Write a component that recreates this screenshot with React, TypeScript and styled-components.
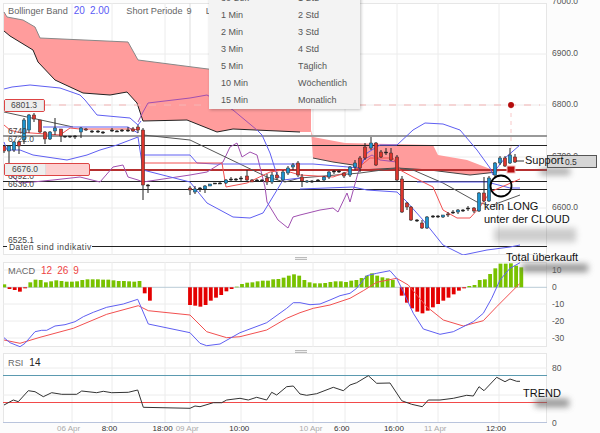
import React from "react"
import styled, { createGlobalStyle } from "styled-components"

const GlobalStyle = createGlobalStyle`
  html, body {
    margin: 0;
    padding: 0;
    background: #fcfcfc;
    font-family: "Liberation Sans", Arial, sans-serif;
  }
`

type Pt = [number, number]

// most curves were read off 3x crops, so they are stored as crop coords
const crop = (ox: number, oy: number, pts: Pt[]): Pt[] =>
  pts.map(([x, y]) => [ox + x / 3, oy + y / 3])

const toPath = (pts: Pt[]) => pts.map(([x, y]) => `${x.toFixed(1)},${y.toFixed(1)}`).join(" ")

const VERTICALS = [72, 112, 165, 190, 241, 313, 345, 397, 438, 499]

const Page = styled.div`
  position: relative;
  width: 600px;
  height: 433px;
  overflow: hidden;
  padding: 3px 0 0 3px;
  box-sizing: border-box;
`

const Panel = styled.section<{ $h: number; $gap: number }>`
  position: relative;
  display: grid;
  grid-template-columns: 544px 53px;
  grid-template-rows: minmax(0, 1fr);
  height: ${p => p.$h}px;
  margin-bottom: ${p => p.$gap}px;
`

const Plot = styled.svg`
  display: block;
  width: 544px;
  height: 100%;
  background: #fff;
  box-shadow: inset 0 0 0 1px #e6e6e6;
`

const Axis = styled.ul<{ $top: number }>`
  list-style: none;
  height: 0;
  margin: ${p => p.$top}px 0 0;
  padding: 0 0 0 5px;
`

const Tick = styled.li<{ $h: number }>`
  height: ${p => p.$h}px;
  line-height: ${p => p.$h}px;
  font-size: 8.5px;
  color: #555;
  white-space: nowrap;
`

const Legend = styled.div<{ $top: number }>`
  position: absolute;
  left: 5px;
  top: ${p => p.$top}px;
  display: flex;
  align-items: center;
  height: 13px;
  font-size: 9.2px;
  color: #666;
  white-space: nowrap;
`

const LegendValue = styled.span<{ $color: string; $left: number }>`
  color: ${p => p.$color};
  margin-left: ${p => p.$left}px;
  font-size: 10px;
`

const LegendName = styled.span<{ $left?: number }>`
  margin-left: ${p => p.$left ?? 0}px;
`

const Menu = styled.div`
  position: absolute;
  left: 209px;
  top: -11px;
  width: 151px;
  padding-bottom: 1px;
  display: grid;
  grid-template-columns: 89px 62px;
  grid-auto-rows: 17px;
  align-items: center;
  background: #f3f3f3;
  box-shadow: 1px 1px 3px rgba(0, 0, 0, 0.25);
  font-size: 9px;
  color: #555;
`

const MenuItem = styled.div<{ $second?: boolean }>`
  padding-left: ${p => (p.$second ? 0 : 12)}px;
`

const PriceTag = styled.div<{ $x: number; $y: number; $w: number }>`
  position: absolute;
  left: ${p => p.$x}px;
  top: ${p => p.$y}px;
  width: ${p => p.$w}px;
  height: 13px;
  display: flex;
  background: #fdcfcf;
  border: 1px solid #d44;
  border-radius: 2px;
  box-sizing: border-box;
  font-size: 8.5px;
  color: #444;
`

const PriceValue = styled.span`
  width: 40px;
  background: #eee;
  border-right: 1px solid #ddd;
  text-align: center;
  line-height: 11px;
`

const CurrentPrice = styled.div`
  position: absolute;
  left: 547px;
  top: 155px;
  width: 50px;
  height: 13px;
  background: #d6d6d6;
  border: 1px solid #555;
  box-sizing: border-box;
  padding-left: 17px;
  font-size: 8.5px;
  line-height: 12px;
  color: #333;
`

const Note = styled.div<{ $x: number; $y: number }>`
  position: absolute;
  left: ${p => p.$x}px;
  top: ${p => p.$y}px;
  font-size: 11px;
  line-height: 13px;
  color: #111;
  white-space: nowrap;
`

const Smudge = styled.div<{ $x: number; $y: number; $w: number; $h: number; $o: number }>`
  position: absolute;
  left: ${p => p.$x}px;
  top: ${p => p.$y}px;
  width: ${p => p.$w}px;
  height: ${p => p.$h}px;
  background: #666;
  opacity: ${p => p.$o};
  filter: blur(3px);
`

const Grip = styled.div<{ $y: number }>`
  position: absolute;
  left: 295px;
  top: ${p => p.$y}px;
  width: 12px;
  height: 3px;
  background: repeating-linear-gradient(#bbb 0 1px, #eee 1px 2px);
`

const TimeAxis = styled.div`
  display: flex;
  height: 10px;
  font-size: 8px;
  line-height: 10px;
  white-space: nowrap;
`

const Time = styled.span<{ $left: number; $muted?: boolean }>`
  margin-left: ${p => p.$left}px;
  color: ${p => (p.$muted ? "#aaa" : "#333")};
`

const Cloud = styled.polygon`
  fill: #ff9c9c;
`

const Curve = styled.polyline<{ $color: string; $w?: number }>`
  fill: none;
  stroke: ${p => p.$color};
  stroke-width: ${p => p.$w ?? 1};
  stroke-linejoin: round;
`

const Level = styled.line<{ $color: string; $w?: number }>`
  stroke: ${p => p.$color};
  stroke-width: ${p => p.$w ?? 1};
`

const PlotLabel = styled.text<{ $spaced?: boolean }>`
  font-size: 8.5px;
  letter-spacing: ${p => (p.$spaced ? 0.45 : 0)}px;
  fill: #444;
`

const BLUE = "#5f5ff2"
const RED = "#f25050"
const PURPLE = "#a050b0"

const cloudA: Pt[] = [
  [4, 12], [7, 17], [23, 20], [35, 27], [40, 38], [128, 42], [138, 60], [200, 68], [240, 73], [311, 100],
  [311, 132], [300, 132], [233, 129], [217, 132], [187, 120], [143, 121], [137, 103], [127, 92], [110, 95],
  [83, 93], [55, 80], [38, 62], [33, 50], [10, 36], [4, 31],
]
const cloudB: Pt[] = [
  [311, 130], [313, 137], [345, 143], [433, 145], [438, 155], [467, 160], [493, 170], [500, 172],
  [470, 175], [430, 170], [397, 168], [360, 170], [353, 165], [333, 162], [313, 158],
]
const cloudEdgeTop: Pt[] = [[4, 12], [7, 17], [23, 20], [35, 27], [40, 38], [128, 42], [138, 60], [200, 68], [240, 73]]
const cloudEdgeBottom: Pt[] = [
  [4, 31], [10, 36], [33, 50], [38, 62], [55, 80], [83, 93], [110, 95], [127, 92], [137, 103], [143, 121],
  [187, 120], [217, 132], [233, 129], [300, 132],
]
const cloudEdgeB: Pt[] = [[313, 158], [333, 162], [353, 165], [360, 170], [397, 168], [430, 170], [470, 175], [497, 172]]

const bollinger: Pt[][] = [
  [[4, 89], [12, 87], [30, 85], [60, 88], [80, 95], [85, 100], [97, 115], [130, 118], [138, 125], [141, 121]],
  [[43, 127], [128, 127], [138, 133]],
  [[4, 142], [7, 150], [20, 150], [33, 155], [67, 160], [87, 155], [100, 150], [117, 145], [138, 137], [143, 170],
   [190, 182], [207, 203], [233, 217], [250, 218], [263, 213], [277, 190], [283, 180], [300, 178]],
  [[143, 155], [190, 155], [197, 163], [215, 164], [313, 164], [360, 168], [367, 153], [380, 145], [397, 145],
   [413, 130], [425, 123], [443, 124], [460, 130], [477, 150], [490, 168], [493, 175], [497, 168], [505, 158], [520, 145]],
  [[257, 130], [262, 135], [270, 153], [277, 175], [283, 180]],
  [[300, 189], [353, 187], [367, 190], [397, 192], [407, 202], [423, 220], [443, 245], [463, 255], [487, 250], [510, 247], [520, 245]],
  [[417, 182], [487, 182], [510, 188], [520, 188]],
]
const midBand: Pt[][] = [
  [[4, 125], [10, 130], [17, 132], [60, 135], [70, 128], [80, 129], [133, 129], [138, 130]],
  [[143, 163], [222, 163], [226, 187], [247, 183], [270, 172], [283, 170], [300, 175], [333, 177], [358, 168],
   [370, 158], [393, 158], [400, 170], [413, 177], [433, 187], [443, 210], [457, 218], [470, 218], [480, 207], [490, 192], [520, 179]],
]
const average: Pt[][] = [
  [[4, 112], [73, 127]],
  [[143, 135], [190, 140], [267, 177], [285, 182], [300, 178], [360, 173], [397, 168], [413, 170], [443, 183], [477, 202], [488, 205]],
  [[493, 205], [520, 195]],
]
const purple: Pt[][] = [
  [[138, 122], [143, 112], [148, 103], [190, 98], [207, 95], [233, 110], [257, 130]],
  [[8, 173], [20, 183], [33, 182], [53, 180], [80, 177], [100, 182], [113, 167], [123, 165], [128, 177], [138, 180],
   [143, 182], [190, 175], [207, 172], [223, 162], [230, 147], [237, 143], [242, 157], [250, 152], [257, 155], [265, 187],
   [267, 202], [278, 220], [288, 228], [293, 217], [300, 215], [320, 210], [333, 208], [338, 212], [347, 193], [350, 202],
   [358, 173], [363, 160], [372, 155], [380, 160], [397, 162]],
]

// x, body top, body bottom, wick top, wick bottom, up
type Candle = [number, number, number, number, number, boolean]
const candles: Candle[] = [
  [4, 146, 151, 145, 153, false], [9, 146, 151, 145, 175, true], [14, 142, 150, 141, 152, true], [19, 142, 146, 141, 154, false],
  [24, 120, 140, 118, 144, true], [29, 115, 130, 114, 133, true], [34, 115, 119, 113, 122, false], [40, 120, 132, 120, 133, false],
  [45, 132, 139, 131, 144, false], [50, 132, 139, 131, 140, true], [55, 128, 131, 118, 135, true], [61, 129, 136, 129, 142, false],
  [65, 136, 136.5, 136, 138, true], [70, 136, 136.5, 136, 138, true], [75, 136, 136.5, 135, 139, true],
  [81, 128, 132, 127, 138, true], [86, 129, 130, 128, 131, false], [92, 131, 131.5, 130, 133, true], [98, 131, 131.5, 130, 133, true],
  [103, 132, 132.5, 131, 134, true], [112, 130, 130.5, 128, 132, true], [117, 131, 131.5, 130, 132, true], [122, 130, 130.5, 129, 132, true],
  [128, 130, 130.5, 127, 132, true], [133, 129, 131, 127, 132, false], [138, 127, 130, 125, 133, false],
  [143, 130, 185, 128, 200, false], [148, 185, 185.5, 184, 193, true],
  [190, 188, 190, 186, 195, false], [195, 189, 192, 186, 194, true], [200, 188, 188.5, 187, 192, true], [205, 186, 189, 185, 193, true],
  [210, 184, 186, 184, 186, true], [215, 183, 183.5, 183, 184, true], [220, 183, 183.5, 182, 184, true], [226, 180, 183, 179, 184, true],
  [231, 179, 179.5, 177, 182, true], [236, 179, 179.5, 178, 181, true], [241, 178, 178.5, 176, 181, true], [247, 176, 180, 170, 182, false],
  [252, 180, 182, 179, 182, false], [257, 180, 180.5, 179, 181, true], [262, 180, 180.5, 179, 181, true], [267, 178, 182, 174, 185, false],
  [272, 175, 182, 172, 184, true], [277, 175, 178, 172, 180, false], [283, 172, 180, 170, 181, true], [288, 168, 173, 166, 175, true],
  [293, 165, 167, 163, 170, true], [298, 163, 175, 161, 177, false],
  [302, 177, 181, 174, 187, false], [307, 181, 182, 180, 183, true], [312, 181, 181.5, 180, 183, true], [318, 180, 180.5, 179, 182, true],
  [324, 177, 180, 176, 181, true], [329, 172, 177, 171, 179, true], [334, 171, 171.5, 170, 174, true], [339, 171, 171.5, 170, 173, true],
  [344, 173, 176, 172, 178, false], [350, 167, 175, 166, 177, true], [355, 163, 167, 160, 170, true], [360, 158, 168, 156, 172, false],
  [365, 147, 158, 143, 160, false], [371, 143, 148, 137, 150, true], [376, 143, 165, 142, 166, false], [381, 152, 157, 150, 158, false],
  [386, 152, 152.5, 148, 155, true], [391, 153, 160, 148, 161, false], [397, 157, 180, 155, 182, false], [402, 179, 212, 176, 213, false],
  [407, 203, 207, 202, 210, false], [411, 207, 220, 206, 221, false], [417, 220, 220.5, 219, 222, true], [422, 223, 228, 220, 229, false],
  [427, 217, 228, 216, 229, true], [433, 216, 216.5, 215, 218, true], [438, 216, 216.5, 215, 218, true], [443, 215, 217, 215, 218, true],
  [448, 214, 215, 212, 217, false], [453, 212, 212.5, 210, 214, true], [458, 210, 212, 209, 214, true], [463, 210, 210.5, 209, 212, true],
  [468, 208, 208.5, 206, 211, true], [474, 208, 211, 207, 213, false], [479, 193, 211, 192, 212, true], [484, 193, 201, 177, 202, false],
  [489, 178, 201, 176, 202, true], [495, 163, 175, 162, 177, true], [500, 158, 163, 156, 165, true], [505, 158, 166, 156, 167, false],
  [510, 155, 163, 148, 164, true], [515, 157, 162, 154, 163, false],
]

const macdLeft = [
  103, 117, 120, 125, 115, 97, 89, 90, 97, 94, 91, 93, 95, 95, 94, 90, 88, 88, 88, 89, 89, 91, 93, 93, 94, 95, 93, 130, 152,
]
const macdMid = [
  165, 167, 170, 165, 152, 143, 135, 124, 117, 110, 102, 98, 97, 94, 92, 92, 88, 87, 83, 77, 73, 77, 90, 97, 100, 100, 99, 96,
  94, 94, 96, 92, 90, 84, 77, 70, 77, 82, 85, 90,
]
const macdRight = [
  137, 158, 175, 185, 190, 182, 172, 162, 152, 143, 133, 122, 115, 108, 105, 90, 88, 72, 55, 41, 41, 40, 47, 52,
]
// bars are 5.2px apart; value is the bar's far end in the crop, 112 is the zero line
const bars: { x: number; v: number }[] = [
  ...macdLeft.map((v, i) => ({ x: 4.3 + i * 5.2, v })),
  ...macdMid.map((v, i) => ({ x: 190 + i * 5.2, v })),
  ...macdRight.map((v, i) => ({ x: 401.7 + i * 5.2, v })),
]

const macdBlue = [
  ...crop(0, 250, [[12, 263], [30, 278], [60, 290], [75, 280], [105, 245], [125, 241], [140, 241], [165, 228], [195, 224], [225, 215],
    [250, 200], [280, 187], [320, 172], [370, 162], [413, 148], [445, 222], [570, 248], [600, 280], [620, 287], [660, 282], [720, 248],
    [800, 218], [860, 175], [880, 158], [900, 158]]),
  ...crop(300, 250, [[30, 164], [60, 162], [90, 150], [120, 137], [150, 130], [170, 115], [200, 77], [230, 70], [270, 62], [290, 85],
    [310, 125], [340, 190], [370, 237], [420, 253], [460, 245], [520, 215], [550, 190], [575, 145], [600, 90], [630, 55], [660, 38]]),
]
const macdRed = [
  ...crop(0, 250, [[12, 270], [60, 280], [120, 262], [220, 235], [320, 193], [415, 167], [445, 182], [570, 195], [620, 245], [680, 263],
    [720, 260], [800, 240], [860, 205], [900, 188]]),
  ...crop(300, 250, [[40, 175], [90, 165], [150, 145], [190, 122], [230, 97], [290, 85], [325, 105], [380, 170], [430, 210], [490, 228],
    [550, 212], [590, 170], [660, 100]]),
]
const rsi = [
  ...crop(0, 250, [[12, 465], [40, 450], [55, 455], [85, 422], [105, 425], [130, 440], [155, 428], [185, 433], [230, 433], [245, 423],
    [290, 428], [310, 424], [335, 428], [385, 427], [413, 420], [430, 472], [570, 475], [585, 468], [600, 470], [640, 458], [665, 458],
    [680, 450], [720, 445], [745, 450], [770, 442], [800, 450], [815, 427], [830, 435], [860, 410], [880, 408], [900, 432]]),
  ...crop(300, 250, [[20, 436], [50, 431], [100, 412], [130, 422], [150, 405], [170, 398], [205, 377], [230, 400], [270, 399], [305, 452],
    [335, 463], [367, 470], [385, 450], [420, 450], [460, 445], [500, 436], [520, 438], [537, 410], [552, 422], [590, 382], [615, 395],
    [630, 387], [650, 394], [660, 394]]),
]

const Grid: React.FC<{ top: number; bottom: number; rows: number[] }> = ({ top, bottom, rows }) => (
  <g>
    {VERTICALS.map(x => (
      <Level key={x} x1={x} x2={x} y1={top} y2={bottom} $color={x === 190 ? "#ddd" : "#ececec"} />
    ))}
    {rows.map(y => (
      <Level key={y} x1={3} x2={547} y1={y} y2={y} $color="#ececec" />
    ))}
  </g>
)

const MainChart: React.FC = () => (
  <Plot viewBox="3 3 544 252" preserveAspectRatio="none">
    <Grid top={3} bottom={255} rows={[54, 105, 157, 208]} />
    <Cloud points={toPath(cloudA)} />
    <Cloud points={toPath(cloudB)} />
    <Curve points={toPath(cloudEdgeTop)} $color="#888" />
    <Curve points={toPath(cloudEdgeBottom)} $color="#222" />
    <Curve points={toPath(cloudEdgeB)} $color="#444" />
    <Level x1={44} x2={540} y1={105} y2={105} $color="#f5b5b5" strokeDasharray="7 8" />
    <Level x1={511} x2={511} y1={105} y2={160} $color="#f8c8c8" strokeDasharray="4 4" />
    <circle cx={511} cy={105} r={3} fill="#b40c0c" />
    <Level x1={3} x2={547} y1={136} y2={136} $color="#999" $w={2} />
    <Level x1={3} x2={547} y1={145.5} y2={145.5} $color="#222" />
    <Level x1={3} x2={547} y1={181.5} y2={181.5} $color="#222" />
    <Level x1={3} x2={547} y1={189.5} y2={189.5} $color="#222" />
    <Level x1={3} x2={7} y1={246.5} y2={246.5} $color="#222" />
    <Level x1={92} x2={547} y1={246.5} y2={246.5} $color="#222" />
    <Level x1={89} x2={547} y1={170} y2={170} $color="#b53030" $w={2} />
    {purple.map((pts, i) => <Curve key={i} points={toPath(pts)} $color={PURPLE} />)}
    {average.map((pts, i) => <Curve key={i} points={toPath(pts)} $color="#555" />)}
    {bollinger.map((pts, i) => <Curve key={i} points={toPath(pts)} $color={BLUE} />)}
    {midBand.map((pts, i) => <Curve key={i} points={toPath(pts)} $color={RED} />)}
    {candles.map(([x, top, bottom, high, low, up]) => (
      <g key={x}>
        <Level x1={x} x2={x} y1={high} y2={low} $color="#222" />
        <rect
          x={x - 1.7}
          y={top}
          width={3.4}
          height={Math.max(bottom - top, 1)}
          fill={bottom - top < 1 ? "#111" : up ? "#1c93cf" : "#dd352c"}
          stroke="#333"
          strokeWidth={0.5}
        />
      </g>
    ))}
    <circle cx={501} cy={186} r={10.5} fill="none" stroke="#000" strokeWidth={1.8} />
    <rect x={507} y={166} width={8} height={7} fill="#b80f0f" stroke="#f3c6c6" />
    <Level x1={516} x2={524} y1={161} y2={161} $color="#333" />
    <PlotLabel x={8} y={134}>6740</PlotLabel>
    <PlotLabel x={8} y={142}>6722.0</PlotLabel>
    <PlotLabel x={8} y={179}>6692.0</PlotLabel>
    <PlotLabel x={8} y={187}>6636.0</PlotLabel>
    <PlotLabel x={8} y={243}>6525.1</PlotLabel>
    <PlotLabel x={9} y={250} $spaced>Daten sind indikativ</PlotLabel>
  </Plot>
)

const MacdChart: React.FC = () => (
  <Plot viewBox="3 262 544 85" preserveAspectRatio="none">
    <Grid top={262} bottom={347} rows={[270, 304, 321, 338]} />
    <Level x1={3} x2={547} y1={287.3} y2={287.3} $color="#b9cbd6" />
    {bars.map(({ x, v }) => {
      const y = 250 + v / 3
      const zero = 287.3
      return (
        <rect
          key={x}
          x={x - 1.9}
          y={Math.min(y, zero)}
          width={3.8}
          height={Math.abs(y - zero)}
          fill={y < zero ? "#78c200" : "#e40000"}
        />
      )
    })}
    <Curve points={toPath(macdRed)} $color={RED} />
    <Curve points={toPath(macdBlue)} $color={BLUE} />
  </Plot>
)

const RsiChart: React.FC = () => (
  <Plot viewBox="3 353 544 70" preserveAspectRatio="none">
    <Grid top={353} bottom={423} rows={[368, 395]} />
    <Level x1={3} x2={547} y1={375.5} y2={375.5} $color="#5b9ab0" />
    <Level x1={3} x2={547} y1={402.5} y2={402.5} $color="#f24a4a" />
    <Level x1={3} x2={547} y1={422.5} y2={422.5} $color="#b9c4dc" />
    <Curve points={toPath(rsi)} $color="#333" />
  </Plot>
)

const menuRows = [
  ["30 Sek", "1 Std"],
  ["1 Min", "2 Std"],
  ["2 Min", "3 Std"],
  ["3 Min", "4 Std"],
  ["5 Min", "Täglich"],
  ["10 Min", "Wöchentlich"],
  ["15 Min", "Monatlich"],
]

const App: React.FC = () => (
  <Page>
    <GlobalStyle />
    <Panel $h={252} $gap={7}>
      <MainChart />
      <Axis $top={-27}>
        {["7000.0", "6900.0", "6800.0", "6700.0", "6600.0"].map(t => (
          <Tick key={t} $h={51.6}>{t}</Tick>
        ))}
      </Axis>
      <Legend $top={1}>
        <LegendName>Bollinger Band</LegendName>
        <LegendValue $color="#5a5af5" $left={6}>20</LegendValue>
        <LegendValue $color="#5a5af5" $left={5}>2.00</LegendValue>
        <LegendName $left={17}>Short Periode</LegendName>
        <LegendName $left={4}>9</LegendName>
        <LegendName $left={14}>L</LegendName>
      </Legend>
    </Panel>
    <Panel $h={85} $gap={6}>
      <MacdChart />
      <Axis $top={0}>
        {["10", "0", "-10", "-20", "-30"].map(t => (
          <Tick key={t} $h={17}>{t}</Tick>
        ))}
      </Axis>
      <Legend $top={2}>
        <LegendName>MACD</LegendName>
        <LegendValue $color="#ee4444" $left={6}>12</LegendValue>
        <LegendValue $color="#ee4444" $left={5}>26</LegendValue>
        <LegendValue $color="#ee4444" $left={5}>9</LegendValue>
      </Legend>
    </Panel>
    <Panel $h={70} $gap={1}>
      <RsiChart />
      <Axis $top={6}>
        {["80", "", "", "0"].map((t, i) => (
          <Tick key={i} $h={18.2}>{t}</Tick>
        ))}
      </Axis>
      <Legend $top={3}>
        <LegendName>RSI</LegendName>
        <LegendValue $color="#222" $left={6}>14</LegendValue>
      </Legend>
    </Panel>
    <TimeAxis>
      <Time $muted $left={54}>06 Apr</Time>
      <Time $left={21.5}>8:00</Time>
      <Time $left={35.4}>18:00</Time>
      <Time $muted $left={3}>09 Apr</Time>
      <Time $left={30.5}>10:00</Time>
      <Time $muted $left={50}>10 Apr</Time>
      <Time $left={11.5}>6:00</Time>
      <Time $left={34.4}>16:00</Time>
      <Time $muted $left={20}>11 Apr</Time>
      <Time $left={39.5}>12:00</Time>
    </TimeAxis>

    <Menu>
      {menuRows.map(([a, b]) => (
        <React.Fragment key={a}>
          <MenuItem>{a}</MenuItem>
          <MenuItem $second>{b}</MenuItem>
        </React.Fragment>
      ))}
    </Menu>
    <PriceTag $x={4} $y={99} $w={41}><PriceValue>6801.3</PriceValue></PriceTag>
    <PriceTag $x={4} $y={163} $w={86}><PriceValue>6676.0</PriceValue></PriceTag>
    <Grip $y={257} />
    <Grip $y={350} />

    <Smudge $x={540} $y={168} $w={30} $h={7} $o={0.55} />
    <Smudge $x={494} $y={228} $w={82} $h={14} $o={0.32} />
    <Smudge $x={522} $y={264} $w={66} $h={8} $o={0.7} />
    <Smudge $x={535} $y={399} $w={34} $h={8} $o={0.7} />
    <CurrentPrice>0.5</CurrentPrice>
    <Note $x={525} $y={154}>Support</Note>
    <Note $x={484} $y={200}>kein LONG</Note>
    <Note $x={484} $y={213}>unter der CLOUD</Note>
    <Note $x={506} $y={251}>Total überkauft</Note>
    <Note $x={523} $y={387}>TREND</Note>
  </Page>
)

export default App
